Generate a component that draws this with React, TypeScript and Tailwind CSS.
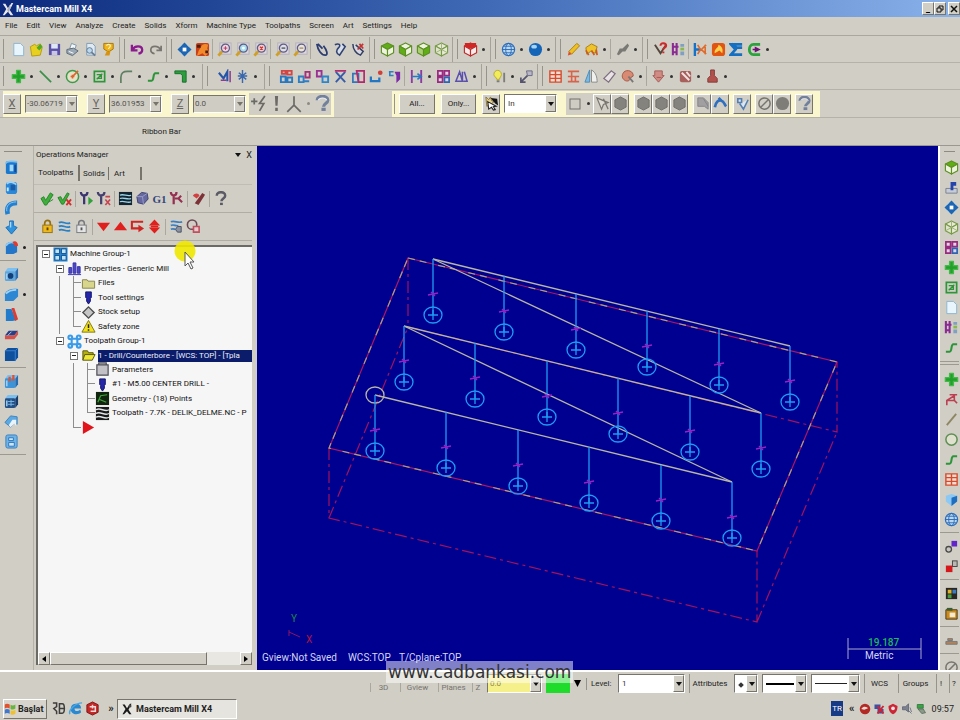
import React from 'react';

type IconMap = Record<string, React.ReactNode>;

const magnifier = (lens: string, mark: React.ReactNode) => (
  <>
    <rect x="3" y="1" width="12" height="12" fill="#ddd6dc" stroke="#b3aebb" />
    <path d="M5.5 10 1.500 14.500" stroke="#cf9f26" strokeWidth="3" />
    <circle cx="9" cy="6.500" r="4.300" fill={lens} stroke="#5f5d86" strokeWidth="1.400" />
    {mark}
  </>
);

const cube = (top: string, left: string, right: string, line = '#5d8f22') => (
  <g stroke={line} strokeWidth="1.200" strokeLinejoin="round">
    <path d="M8 1 14.500 4.300 8 8 1.500 4.300z" fill={top} />
    <path d="M1.500 4.300 8 8v7l-6.500-3.500z" fill={left} />
    <path d="M14.500 4.300 8 8v7l6.500-3.500z" fill={right} />
  </g>
);

const hexagon = (fill: string) => (
  <path d="M8 1 14 4.2V11.8L8 15 2 11.8V4.2z" fill={fill} stroke="#6f6e69" />
);

const solid = (front: string, accent: string) => (
  <>
    <path d="M1 5 4 1h11l-3 4z" fill="#7cc0f2" />
    <path d="M12 5 15 1v10l-3 4z" fill={accent} />
    <rect x="1" y="4.500" width="11" height="10.500" rx="1.500" fill={front} />
    <path d="M3 7v6" stroke="#a5d6fb" strokeWidth="1.500" />
  </>
);

const icons: IconMap = {
  newFile: (
    <path d="M3 1.5h7l3.5 3.5v9.5H3z" fill="#e9f5fd" stroke="#8db4cf" />
  ),
  open: (
    <>
      <path d="M1.5 5 6 2.5l2 1.5 4-2 2 4-2 8-9 1z" fill="#e8d021" stroke="#b59a10" />
      <path d="M8 6 12 2l2.5 3-3.5 4z" fill="#4faa25" />
    </>
  ),
  save: (
    <>
      <path d="M2 2h12v12H2z" fill="#5a50a8" />
      <path d="M4.5 2h7v5h-7z" fill="#dfe6f5" />
      <path d="M5 9.500h6V14H5z" fill="#c9c6e4" />
    </>
  ),
  print: (
    <>
      <path d="M5 7 7 1.500l5 2-1.500 4z" fill="#f4f8fb" stroke="#7d93a6" />
      <path d="M2 8 9 6.500l5 3-6 5-6-2.500z" fill="#9aa7b4" stroke="#5d6a78" />
      <path d="m4 10 5 2" stroke="#fff" />
    </>
  ),
  preview: (
    <>
      <path d="M4 1.500h6l3 3V14H4z" fill="#dfeaf3" stroke="#7f9bb3" />
      <circle cx="7" cy="9" r="3" fill="#bcd9ee" stroke="#5d7790" />
      <path d="m9 11 4 3.500" stroke="#6b7f92" strokeWidth="2" />
    </>
  ),
  trophy: (
    <>
      <path d="M3 1.500h10v6L9 10H7L3 7.500z" fill="#f0b41c" stroke="#a8740a" />
      <path d="M6 10h4l-1 4.500H4z" fill="#d8920f" />
      <path d="M6 4c0-2 4-2 4 0S8 6 8 7.500" stroke="#fff2b0" fill="none" strokeWidth="1.300" />
    </>
  ),
  undo: <path d="M2 3v6h6M2.500 8.500C5 3.500 12.500 3.500 13 8c.2 2.500-1.500 4-4 4.500" fill="none" stroke="#8c1a8f" strokeWidth="2.400" />,
  redo: <path d="M14 4v5H9M13.500 8.500C11 3.500 3.500 3.500 3 8c-.2 2.500 1.500 4 4 4.500" fill="none" stroke="#77756f" strokeWidth="1.800" />,
  fit: (
    <>
      <path d="M8 .5 15.500 8 8 15.500.5 8z" fill="#1d66b4" />
      <path d="M3 5.500 5.500 3M10.500 3 13 5.500M13 10.500 10.500 13M5.500 13 3 10.500" stroke="#7db8e4" />
      <rect x="6" y="6" width="4" height="4" fill="#fff" />
    </>
  ),
  repaint: (
    <>
      <rect x="1" y="1" width="14" height="14" rx="2" fill="#c8401a" />
      <path d="M6 6c2-5 6-4 8-3l-1 4 2 4-4 4-3-3-6 3 2-6z" fill="#f28a2c" />
      <path d="M2 3h4v3H2zM11 9h3v3h-3z" fill="#4a1d12" />
    </>
  ),
  zoomWindow: magnifier('#f0d7dd', <path d="M7 6.500h4M9 4.500v4" stroke="#b03868" />),
  zoomTarget: magnifier('#a9e0f0', <circle cx="9" cy="6.500" r="1.500" fill="#fff" />),
  zoomSelected: magnifier('#f3cfcf', <path d="m7.500 5 3 3M10.500 5l-3 3" stroke="#d03030" strokeWidth="1.400" />),
  zoomOut: magnifier('#dfdfe6', <path d="M7 6.500h4" stroke="#445" strokeWidth="1.300" />),
  zoomHalf: magnifier('#e9e6d8', <path d="M7 6.500h4" stroke="#865" />),
  spin: <path d="M2 2c1 7 5 12 9 12 3 0 2-5-2-10M3 2l5 5" fill="none" stroke="#2a3c70" strokeWidth="1.900" />,
  spinPen: (
    <path d="M2 3c4-2 7 0 4 3s-3 6 1 8l6-9-3-3" fill="#d7dde9" stroke="#2f4272" strokeWidth="1.700" />
  ),
  spinRed: (
    <>
      <path d="M2 2c0 6 4 11 8 12l3-4-8-7" fill="#d6d9e2" stroke="#344061" strokeWidth="1.600" />
      <path d="m7 8 6-6M9 2l4 5" stroke="#c43131" strokeWidth="1.800" />
    </>
  ),
  cubeTop: cube('#5fae16', '#edf3de', '#edf3de'),
  cubeFront: cube('#edf3de', '#5fae16', '#edf3de'),
  cubeSide: cube('#edf3de', '#a9cf72', '#5fae16'),
  cubeIso: (
    <>
      {cube('#e8ead6', '#dfe3cb', '#e8ead6', '#789b48')}
      <path d="M8 1v7M1.500 11.500 8 8l6.500 3.500" stroke="#9cb27a" fill="none" />
    </>
  ),
  cubeRed: (
    <>
      {cube('#e9b9b4', '#f7eceb', '#f7eceb', '#c02a2a')}
      <path d="M2 1h12v4l-6 2-6-2z" fill="#cf2626" />
    </>
  ),
  globe: (
    <g fill="none" stroke="#2c6cba">
      <circle cx="8" cy="8" r="6.500" fill="#bcd8ee" strokeWidth="1.300" />
      <ellipse cx="8" cy="8" rx="3" ry="6.500" />
      <path d="M1.500 8h13M3 4.500h10M3 11.500h10" />
    </g>
  ),
  sphere: (
    <>
      <circle cx="8" cy="8" r="7" fill="#1464b8" />
      <ellipse cx="6.500" cy="5" rx="3" ry="2" fill="#a6d4f5" />
    </>
  ),
  pencil: (
    <>
      <path d="M11.500 1.500 14.500 4 6 13l-3-3z" fill="#f0c020" stroke="#a97d12" />
      <path d="M3 10l3 3-4 1.500z" fill="#dd4a28" />
    </>
  ),
  pencils: (
    <>
      <path d="M2 6 8 2l6 3-2 7-5-2-4 3z" fill="#eec42a" stroke="#a97c14" />
      <path d="M2 9 5 14M8 9l3 5M13 8l1 6" stroke="#cc5b22" strokeWidth="1.800" />
    </>
  ),
  pencilGray: <path d="M13.500 1.500 8 7H5l-3 6 2 1 4-4h3l4-6z" fill="#7b7974" />,
  askRed: (
    <>
      <path d="m2 3 6 9 6-9" fill="none" stroke="#55463c" strokeWidth="2" />
      <path d="M8 4c0-4 6-3 6 0 0 2-3 2-3 4M11 10v2" fill="none" stroke="#d02828" strokeWidth="2.200" />
    </>
  ),
  machine: (
    <>
      <path d="M2 1v13M2 5h6M6 1v13M2 11h4" stroke="#8a2a93" strokeWidth="2.200" />
      <path d="M10 2h4v3h-4zM10 10h4v4h-4z" fill="#7f9fc4" />
      <path d="M10 6h4v3h-4z" fill="#8cb84a" />
    </>
  ),
  mirrorBlue: (
    <>
      <path d="M2 1v14M2 8h6" stroke="#1672c6" strokeWidth="2.500" />
      <path d="M5 3 8 8 5 13M14 3l-5 5 5 5M13 3v10" fill="none" stroke="#e06a2c" strokeWidth="1.700" />
    </>
  ),
  flame: (
    <>
      <rect x="1" y="1" width="14" height="14" rx="3" fill="#e05512" />
      <path d="M4 12C3 7 8 7 8 3c4 2 5 5 4 9l-3-3z" fill="#ffd04d" />
    </>
  ),
  sigma: <path d="M14 2.500H2L7 8l-5 5.500h12M3 2l5 4h6" fill="none" stroke="#1570c4" strokeWidth="2.800" />,
  cRegion: (
    <>
      <path d="M14 2.500H7C1 2.500 1 13.500 7 13.500h7" fill="none" stroke="#2aa33c" strokeWidth="3" />
      <path d="M6 8h6M9 6l4 2-4 2z" stroke="#6c1577" fill="#6c1577" strokeWidth="1.500" />
    </>
  ),
  point: <path d="M6 1.500h4V6h4.500v4H10v4.500H6V10H1.500V6H6z" fill="#23a02b" stroke="#45b84a" strokeLinejoin="round" strokeWidth="1.500" />,
  line: <path d="m2 2 12 12" stroke="#3b8f48" strokeWidth="1.800" />,
  arc: (
    <>
      <circle cx="8" cy="8" r="6.500" fill="#e4e2c8" stroke="#3e9a4a" strokeWidth="1.600" />
      <path d="M6 8h4M8 6v4M9 7l5-5" stroke="#e2622b" strokeWidth="1.700" />
    </>
  ),
  rect: (
    <>
      <rect x="2.500" y="2.500" width="11" height="11" fill="none" stroke="#2d9639" strokeWidth="1.800" />
      <path d="M5 6h5v4H5M11 5 5 11" fill="none" stroke="#2d9639" strokeWidth="1.400" />
    </>
  ),
  fillet: <path d="M2 15V9c0-5 3-6.500 7-6.500h5" fill="none" stroke="#5f7f62" strokeWidth="1.800" />,
  spline: <path d="M2 12.500h4c3 0 1-8 4-8h4" fill="none" stroke="#2c9439" strokeWidth="2.200" />,
  sweep: <path d="M2 2h12v12h-4V7L8 5H2z" fill="#2e9d3c" stroke="#14702a" />,
  dimension: (
    <>
      <path d="m2 4 5 6 4-7v10" fill="none" stroke="#2355a8" strokeWidth="2.200" />
      <path d="M14 2v12M4 12h6" stroke="#8b3c90" strokeWidth="1.600" />
    </>
  ),
  note: <path d="M8 1v14M4 4l4 3 4-3M4 11l4-3 4 3M3 7.500h10" fill="none" stroke="#3b67ad" strokeWidth="1.500" />,
  xTranslate: (
    <g fill="none" strokeWidth="2">
      <path d="M2 8h5v6H2zM9 9h5v5H9z" stroke="#2878c0" />
      <path d="M9 2h4.500v4H9zM3 2h4v3H3z" stroke="#d24545" />
    </g>
  ),
  xRotate: (
    <g fill="none" strokeWidth="2">
      <path d="M2 8h5v6H2zM8 13h5" stroke="#2b7fc7" />
      <path d="M9 3h4.500v6H9z" stroke="#a33079" />
    </g>
  ),
  xMirror: (
    <g fill="none" strokeWidth="2">
      <path d="M2 2h5v6H2z" stroke="#9b2f94" />
      <path d="M8 8h6v6H8z" stroke="#2d86cc" />
    </g>
  ),
  xOffset: (
    <>
      <path d="m3 3 10 11M13 3 3 14" stroke="#375ba9" strokeWidth="2" />
      <path d="M2 2h12" stroke="#b3276c" strokeWidth="1.800" />
    </>
  ),
  xScale: (
    <g fill="none" strokeWidth="1.800">
      <path d="M2 5h6v9H2z" stroke="#3175bf" />
      <path d="M6 2h8v12H8z" stroke="#b3276c" />
    </g>
  ),
  xDrag: (
    <>
      <path d="M2 8v5h9V9" fill="none" stroke="#2376c4" strokeWidth="2.400" />
      <circle cx="12" cy="4" r="2.500" fill="#d04038" />
    </>
  ),
  xRoll: (
    <>
      <path d="M8 3h6v8l-4 4V7z" fill="#7a2aa5" />
      <path d="M2 3h5M3 3v4h4" stroke="#2b7fc7" strokeWidth="1.700" fill="none" />
    </>
  ),
  nest: (
    <>
      <path d="M3 1v14M13 1v14" stroke="#8d3ba3" strokeWidth="2" />
      <path d="M3 8h10M9 5l4 3-4 3" fill="none" stroke="#2879c4" strokeWidth="1.700" />
    </>
  ),
  grid4: (
    <g fill="#dfd3e4" stroke="#99297f" strokeWidth="1.800">
      <path d="M2 2h5v5H2zM9 2h5v5H9zM2 9h5v5H2z" />
      <path d="M9 9h5v5H9z" stroke="#2e64b0" />
    </g>
  ),
  cone: <path d="M2 13 6 3l3 10zM9 3v10M11 3l3 10h-4" fill="none" stroke="#5a4fae" strokeWidth="1.600" />,
  bulb: (
    <>
      <path d="M2 6c0-6 8-6 8 0 0 2-2 3-2 5H5C5 9 2 8 2 6z" fill="#f2ec5a" stroke="#b5a92e" />
      <path d="M5 13h3M13 4v10" stroke="#7d7d78" strokeWidth="2" />
    </>
  ),
  gears: (
    <>
      <path d="M8 2h6v5H9z" fill="#b9b7c5" stroke="#6b6985" />
      <path d="M9 7 3 13M2 9v5h5" fill="none" stroke="#55536e" strokeWidth="1.800" />
    </>
  ),
  redGrid: <path d="M2 2h12v12H2zM8 2v12M2 6h12M2 10h12" fill="#f4dcd2" stroke="#d54c2d" strokeWidth="1.500" />,
  redTable: <path d="M2 2.500h12M2 8h12M2 13.500h12M6 2v12M10 8v6" stroke="#d9634a" strokeWidth="1.700" />,
  mirrorHalf: (
    <>
      <path d="M6 1v13H1z" fill="#7fb9de" stroke="#4b8dba" />
      <path d="M8 1c5 3 6 8 6 13H8z" fill="#f0f0ee" stroke="#888" />
    </>
  ),
  eraser: <path d="m10 2 4 3-7 9-5-4z" fill="#e9e3e6" stroke="#7c6e7e" strokeWidth="1.300" />,
  palette: (
    <>
      <path d="M3 5c2-5 10-4 11 1 1 3-3 2-3 4s-3 4-6 2-3-5-2-7z" fill="#d98a72" stroke="#a35644" />
      <path d="m9 8 5 6" stroke="#777" strokeWidth="2" />
    </>
  ),
  toolRed: <path d="M4 2h8v5h2l-6 7-6-7h2zM6 9h5" fill="#cf8b84" stroke="#a45a55" />,
  toolBlock: (
    <>
      <rect x="2" y="2" width="12" height="12" rx="2" fill="#a8605c" />
      <path d="m4 4 8 8M9 3l4 5" stroke="#f0e2e0" strokeWidth="2" />
    </>
  ),
  toolFlat: <path d="M6 1h4v6l3 3v4H3v-4l3-3z" fill="#b2524d" stroke="#843a37" />,
  bolt: <path d="M1 6h6M4 3v6M14 1 9 8h4l-4 7" fill="none" stroke="#6c6a65" strokeWidth="1.600" />,
  bang: <path d="M6.500 1h3L9 10H7zM6.800 12h2.400v3H6.800z" fill="#6c6a65" />,
  axes: <path d="M8 1v8M8 9l-6 6M8 9l6 6" stroke="#6c6a65" strokeWidth="1.500" fill="none" />,
  help: (
    <>
      <path d="M4 5c0-5 9-5 9 0 0 3-4 3-4 6" fill="none" stroke="#5c5a66" strokeWidth="2.600" />
      <rect x="7.500" y="12.500" width="3" height="2.500" fill="#5c5a66" />
    </>
  ),
  helpBlue: (
    <>
      <path d="M3 5c0-5 10-5 10 0 0 3-4 3-4 6" fill="none" stroke="#73809a" strokeWidth="3" />
      <path d="M4 5c1-3 7-3 8 0" fill="none" stroke="#e8eef7" />
      <rect x="7" y="12" width="4" height="3" fill="#73809a" />
    </>
  ),
  cursorStar: (
    <>
      <path d="m2 1 3 3 2-3 1 4 3 1-3 2v4L6 9l-3 2z" fill="#e5d38a" stroke="#8a7440" />
      <path d="m4 6 9 5-3 .5 2 3-2 .5-2-3-3 2z" fill="#fff" stroke="#222" strokeWidth="1.200" />
      <path d="m7 2 7 1 1 7-3-2z" fill="#111" />
    </>
  ),
  box: <rect x="3" y="3" width="10" height="10" fill="#cfccc3" stroke="#73716b" />,
  arrows: <path d="M2 2 7 14 9 9l5-2zM9 3l5 11" fill="#dedbd2" stroke="#77756e" strokeWidth="1.300" />,
  hex: hexagon('#85837e'),
  sheet: <path d="M3 2h6l5 5v7l-4-3H3zM9 3l5 8" fill="#a19fa0" stroke="#85838a" />,
  curveBlue: <path d="M2 12c1-6 4-8 7-7 3 1 3 4 5 6M9 5 6 2" fill="none" stroke="#2f6fc0" strokeWidth="2.800" />,
  verify: <path d="M3 3h4v4H3zM5 8l4 6 5-10" fill="#dde6f0" stroke="#557fb0" strokeWidth="1.700" />,
  noSign: (
    <g fill="none" stroke="#77756f" strokeWidth="1.600">
      <circle cx="8" cy="8" r="6" />
      <path d="m4 12 8-8" />
    </g>
  ),
  disk: <circle cx="8" cy="8" r="7" fill="#7f7d78" />,
  solidA: (
    <>
      <rect x="2" y="1" width="12" height="14" rx="2" fill="#1b78cf" />
      <path d="M2 4c0-3 8-3 12-2" stroke="#7cc0f2" strokeWidth="1.800" fill="none" />
      <path d="M6 5h4v7H6z" fill="#a5d6fb" />
      <path d="M11 5h2v8h-2z" fill="#0d4c9c" />
    </>
  ),
  solidB: (
    <>
      <rect x="2" y="2" width="12" height="13" rx="3" fill="#2b88d8" />
      <path d="M3 4c3-3 7-2 10 1" stroke="#9fd4f6" strokeWidth="2" fill="none" />
      <path d="M7 5h5v6H7z" fill="#1c5ca6" />
      <path d="M4 8v4" stroke="#cfeaff" strokeWidth="2" />
    </>
  ),
  solidArc: (
    <>
      <path d="M4 15C2 7 6 3 14 3" fill="none" stroke="#2380d0" strokeWidth="5" />
      <path d="M3 12C2 6 6 2 13 2" fill="none" stroke="#8ecbf5" />
    </>
  ),
  solidDrop: (
    <>
      <path d="M6 1h4v5l4 2-6 7-6-7 4-2z" fill="#2f93dd" stroke="#1d6cb5" />
      <path d="M7 2v6" stroke="#a5d6fb" strokeWidth="1.500" />
    </>
  ),
  solidBox: (
    <>
      <path d="M2 6c0-5 12-5 12 0v7l-4 2H2z" fill="#2476c8" />
      <path d="M2 6c2-3 6-4 9-3" stroke="#8ecbf5" strokeWidth="2" fill="none" />
      <path d="M9 2c3-2 6 0 6 4l-3 1z" fill="#e23a30" />
    </>
  ),
  solidHole: (
    <>
      {solid('#5fa6dc', '#2d6fb2')}
      <circle cx="7" cy="9.500" r="3" fill="#123f78" />
    </>
  ),
  solidRound: (
    <>
      <path d="M1 7c2-4 7-6 14-5v8l-5 5H1z" fill="#2d87d2" />
      <path d="M2 7c3-3 6-4 11-4" stroke="#9fd4f6" fill="none" strokeWidth="2" />
    </>
  ),
  solidWedge: (
    <>
      <path d="M2 2h6l5 12-4 1H2z" fill="#237ccb" />
      <path d="M8 1h3l4 12-3 2z" fill="#dc3c32" />
    </>
  ),
  solidPlate: (
    <>
      <path d="M1 9 5 4h10l-4 5z" fill="#293e86" />
      <path d="M1 9h10v4H1zM11 9l4-5v4l-4 5z" fill="#d2514b" />
      <path d="M4 9 8 5" stroke="#bcd3ee" />
    </>
  ),
  solidDark: (
    <>
      <path d="M1 4 4 1h11v10l-3 4H1z" fill="#0f509e" />
      <path d="M1 4h11v11M12 4l3-3" stroke="#3c82cf" fill="none" />
    </>
  ),
  solidSlot: (
    <>
      {solid('#3d93d8', '#256db3')}
      <path d="M6 3v5M10 1v6" stroke="#e0512f" strokeWidth="2.400" />
    </>
  ),
  solidGrid: (
    <>
      {solid('#214f86', '#173d6c')}
      <path d="M4 8h7M4 11h7M7.500 6v7" stroke="#7ab8e6" />
    </>
  ),
  solidLeaf: (
    <>
      <path d="M1 9 7 2l7 1v8l-3-2-4 5z" fill="#5ba9e2" stroke="#3f80bb" />
      <path d="M9 6h4v7l-2-3-4 4-2-2z" fill="#e8f3fb" />
    </>
  ),
  solidLight: (
    <>
      <rect x="2" y="1" width="12" height="14" rx="2" fill="#6db3e8" stroke="#3a7fc0" />
      <path d="M5 4h5v3H5zM5 9h6v4H5z" fill="#c9e6fa" stroke="#2f73b5" />
    </>
  ),
  check: <path d="m1 8 3-2 2 4 5-8 3 2-7 11H5zM9 12l5-3" fill="#3fae3a" stroke="#24852a" />,
  checkX: (
    <>
      <path d="m1 7 3-1 2 4 5-8 2 1-6 11H5z" fill="#3fae3a" stroke="#24852a" />
      <path d="m10 9 5 6M15 9l-5 6" stroke="#d32d2d" strokeWidth="1.900" />
    </>
  ),
  toolPlus: (
    <>
      <path d="M2 1c0 5 7 5 7 0M5.500 4v10" fill="none" stroke="#3a3470" strokeWidth="2.400" />
      <path d="M10 6v9l5-4.500z" fill="#2fa03a" />
    </>
  ),
  toolX: (
    <>
      <path d="M2 1c0 5 7 5 7 0M5.500 4v10" fill="none" stroke="#46406f" strokeWidth="2.400" />
      <path d="m10 9 5 6M15 9l-5 6M10 6h5" stroke="#c8444f" strokeWidth="1.700" />
    </>
  ),
  backplot: (
    <>
      <rect x="1" y="1" width="14" height="14" fill="#142430" />
      <path d="M2 4.500c4-2 8 2 12 0M2 8c4-2 8 2 12 0M2 11.500c4-2 8 2 12 0" stroke="#9bd6ea" fill="none" strokeWidth="1.400" />
    </>
  ),
  verifySolid: (
    <>
      <path d="M2 6 7 1.500l6 1 1 6-5 5.500-6-1.500z" fill="#66699f" stroke="#3e416f" />
      <path d="M2 6h6l5-3.500M8 6l1 8" stroke="#9a9cc9" fill="none" />
    </>
  ),
  highfeed: (
    <>
      <path d="M2 1c0 5 6 5 6 0M5 4v10" fill="none" stroke="#963052" strokeWidth="2.400" />
      <path d="M6 8h4l3-3M10 8l4 4" fill="none" stroke="#963052" strokeWidth="2.200" />
    </>
  ),
  wrench: (
    <>
      <path d="M4 13 12 2l3 2-7 11z" fill="#7c3236" />
      <path d="M2 5c2-3 6-3 7 0L6 8z" fill="#d34040" />
    </>
  ),
  lockGold: (
    <>
      <path d="M5 7V4.500c0-4 6-4 6 0V7" fill="none" stroke="#96700c" strokeWidth="1.800" />
      <rect x="3" y="6.500" width="10" height="8" fill="#efb91d" stroke="#94700f" />
      <path d="M8 9v3" stroke="#5d4300" strokeWidth="2" />
    </>
  ),
  lockGray: (
    <>
      <path d="M5 7V4.500c0-4 6-4 6 0V7" fill="none" stroke="#77797e" strokeWidth="1.600" />
      <rect x="3" y="6.500" width="10" height="8" fill="#e4e4e4" stroke="#77797e" />
      <path d="M8 9v3" stroke="#555" strokeWidth="2" />
    </>
  ),
  waves: <path d="M2 4c4-3 8 3 12 0M2 8c4-3 8 3 12 0M2 12c4-3 8 3 12 0" fill="none" stroke="#2980c5" strokeWidth="1.900" />,
  down: <path d="M1 4h14L8 13z" fill="#e0201c" />,
  up: <path d="M1 12h14L8 3z" fill="#e0201c" />,
  insert: (
    <>
      <path d="M14 3H2v7h8" fill="none" stroke="#cf2522" strokeWidth="2.200" />
      <path d="m9 6 6 4-6 4z" fill="#cf2522" />
    </>
  ),
  diamond: (
    <>
      <path d="m8 .5 6 6.500H2zM8 15.500 2 9h12z" fill="#e0201c" />
      <path d="M4 8h8" stroke="#e0201c" strokeWidth="2" />
    </>
  ),
  wavePointer: (
    <>
      <path d="M2 3c4-2 8 2 12 0M2 7c3-2 5 1 8 0M2 11c2-1 4 0 5 0" fill="none" stroke="#3a7fc4" strokeWidth="1.800" />
      <path d="M9 8h4v6H9l-2-3z" fill="#8c93a2" stroke="#4b5060" />
    </>
  ),
  rings: (
    <>
      <circle cx="6.500" cy="6" r="5" fill="none" stroke="#6b4a55" strokeWidth="1.700" />
      <path d="M8 8h6v6H8z" fill="#e6c9cc" stroke="#c0505e" strokeWidth="1.700" />
    </>
  ),
  group: (
    <>
      <rect x=".5" y=".5" width="15" height="15" fill="#2a86cf" />
      <g fill="#bfe3fa" stroke="#0f4f8f">
        <path d="M2 2h5v5H2zM9 2h5v5H9zM2 9h5v5H2zM9 9h5v5H9z" />
      </g>
    </>
  ),
  groupLight: (
    <g fill="none" stroke="#3a9be8" strokeWidth="2.200">
      <circle cx="3.500" cy="3.500" r="2" />
      <circle cx="12.500" cy="3.500" r="2" />
      <circle cx="3.500" cy="12.500" r="2" />
      <circle cx="12.500" cy="12.500" r="2" />
      <path d="M5 5h6v6H5z" />
    </g>
  ),
  properties: <path d="M2 13V7h3v6zM6.500 13V2h3v11zM11 13V6h3v7zM1 14.500h14" fill="#4a48c8" stroke="#3431a6" />,
  folder: <path d="M1.500 4h5l1 1.500h7V13h-13z" fill="#d8d58d" stroke="#85824b" />,
  folderOpen: (
    <>
      <path d="M2 13V3h5l1 2h5v2" fill="#b5b012" stroke="#55540c" />
      <path d="M4 7h11l-3 6H2z" fill="#ece635" stroke="#55540c" />
    </>
  ),
  drill: <path d="M5 2h6v6l-1 1v3l-2 3-2-3V9L5 8z" fill="#2526a8" stroke="#14156a" />,
  stock: <path d="m8 2 6 6-6 6-6-6z" fill="#c5c5c5" stroke="#4d4d4d" strokeWidth="1.500" />,
  warning: (
    <>
      <path d="M8 1.500 15 14H1z" fill="#f1e01b" stroke="#7d7514" />
      <path d="M8 5.500v4M8 11v1.500" stroke="#222" strokeWidth="1.600" />
    </>
  ),
  params: <path d="M2 3h12v11H2zM4 1h8v2H4z" fill="#c3c1c6" stroke="#4f4d57" strokeWidth="1.300" />,
  geometry: (
    <>
      <rect x="1" y="1" width="14" height="14" fill="#10240f" />
      <path d="M3 12 6 5l7-1M5 9l7 3" fill="none" stroke="#3ea53a" strokeWidth="1.300" />
    </>
  ),
  ncFile: (
    <>
      <rect x="1" y="1" width="14" height="14" fill="#17191b" />
      <path d="M1 4c5-3 9 3 14 0M1 8c5-3 9 3 14 0M1 12c5-3 9 3 14 0" stroke="#e2e8e8" fill="none" strokeWidth="1.500" />
    </>
  ),
  insertArrow: <path d="M2 1v14l12-7z" fill="#e0141a" />,
  plane: (
    <>
      <path d="M2 9h12v5H2z" fill="#c7ccd6" stroke="#78808f" />
      <path d="M7 2h6v4h-3v5H7z" fill="#2444ac" />
    </>
  ),
  lineTan: <path d="M3 14 13 2" stroke="#8d8764" strokeWidth="2" />,
  circleGreen: <circle cx="8" cy="8" r="6" fill="#dfe0cd" stroke="#5f8f54" strokeWidth="1.600" />,
  chevronBlue: (
    <>
      <path d="M2 4 8 2l6 2v6l-6 5-6-5z" fill="#8cc8f4" />
      <path d="m8 6 6-2v6l-6 5z" fill="#1f6fc0" />
    </>
  ),
  redCurve: <path d="M3 14V9l8-5v5l3 3M3 9h9M6 3h8" fill="none" stroke="#bd3f52" strokeWidth="1.700" />,
  swapPurple: (
    <>
      <rect x="8" y="2" width="6" height="6" fill="#6225c9" />
      <circle cx="5" cy="11" r="3" fill="#c9c7c2" stroke="#4b4a48" strokeWidth="1.400" />
    </>
  ),
  swapRed: (
    <>
      <rect x="9" y="2" width="5" height="6" fill="#bab8b2" stroke="#454442" />
      <rect x="2" y="7" width="7" height="7" fill="#d4181b" />
    </>
  ),
  colors: (
    <>
      <rect x="2" y="2" width="12" height="12" fill="#2a2722" />
      <path d="M4 4h4v4H4z" fill="#e0b226" />
      <path d="M9 4h4v4H9z" fill="#3c7ac0" />
      <path d="M4 9h4v4H4z" fill="#4b9c3e" />
    </>
  ),
  colorsGold: (
    <>
      <path d="M2 4h12v10H2z" fill="#ca8a1d" stroke="#4a3717" />
      <path d="M6 7h6v5H6z" fill="#f4ead4" />
      <path d="M3 2h6v3H3z" fill="#3b5d36" />
    </>
  ),
  bar: <path d="M2 9h12v3H2zM4 6h5v2H4z" fill="#b2825a" stroke="#777" />,
  mcx: (
    <>
      <path d="M2 2h3l3 5 4-6h2l-4 8 4 6h-3l-3-4-4 4H2l4-7z" fill="#e9e9e9" />
      <path d="m7 9 3-6 1 3-2 6z" fill="#a8b0c0" />
    </>
  ),
  mcxDark: (
    <>
      <path d="M2 2h3l3 5 4-6h2l-4 8 4 6h-3l-3-4-4 4H2l4-7z" fill="#1b1b1b" />
      <circle cx="12" cy="4" r="2" fill="#444" />
    </>
  ),
  windows: (
    <>
      <path d="M1 3c2-1.500 4-1 6 0v5c-2-1-4-1.500-6 0z" fill="#e4502a" />
      <path d="M8 3.500c2 1 4 1 6-.5v5c-2 1.500-4 1.500-6 .5z" fill="#69b53b" />
      <path d="M1 9.500c2-1.500 4-1 6 0v5c-2-1-4-1.500-6 0z" fill="#3f77d0" />
      <path d="M8 10c2 1 4 1 6-.5v5c-2 1.500-4 1.500-6 .5z" fill="#f0c12c" />
    </>
  ),
  quickTool: <path d="M2 2h4v4l-3 2 3 3v3M9 3h3c3 0 3 10 0 10H9zM9 8h5" fill="none" stroke="#3e3d3b" strokeWidth="1.600" />,
  ie: (
    <>
      <path d="M9 3c3 0 5 2 5 5H7c0 4 4 3 6 1l1 3c-4 4-11 2-11-3s3-6 6-6z" fill="#2888d2" />
      <path d="M2 14C0 9 9 2 15 2" stroke="#4ca7e0" fill="none" strokeWidth="1.500" />
    </>
  ),
  redCube: (
    <>
      <path d="m8 1 6 3v8l-6 3-6-3V4z" fill="#c52626" stroke="#7d1616" />
      <path d="M5 6h6v5H6M8 4v4" fill="none" stroke="#f4dada" strokeWidth="1.600" />
    </>
  ),
  trayBall: (
    <>
      <circle cx="8" cy="8" r="7" fill="#b32a24" />
      <path d="M3 8c3-5 8-3 9-1L7 9z" fill="#f3d9d4" />
    </>
  ),
  trayNet: (
    <>
      <path d="M2 2h8v6H2zM6 8h8v6H6z" fill="#3b51a4" />
      <path d="m6 4 8 10M14 4 6 14" stroke="#d7202c" strokeWidth="2.500" />
    </>
  ),
  trayShield: (
    <>
      <path d="M8 1 14 4c0 6-2 9-6 11-4-2-6-5-6-11z" fill="#cc2535" />
      <circle cx="8" cy="7" r="2.500" fill="#f4e3e3" />
    </>
  ),
  traySound: <path d="M2 5h4l4-4v11L6 9H2zM10 10l4 4M12 6l2 6" fill="#7d8290" stroke="#595f70" />,
  trayUsb: (
    <>
      <path d="M3 2h8v5H3z" fill="#3aa346" stroke="#257030" />
      <path d="M4 8h7l3 5-5 1z" fill="#8b9a8c" stroke="#536354" />
    </>
  ),
};

const Icon = ({ name, className = 'size-4' }: { name: string; className?: string }) => (
  <svg viewBox="0 0 16 16" aria-hidden="true" className={`shrink-0 ${className}`}>
    {icons[name]}
  </svg>
);

// "." drop-down mark, "|" thin separator, "||" toolbar boundary, "=" wide boundary
const rowOne = [
  'newFile', 'open', 'save', 'print', 'preview', 'trophy', '||', 'undo', 'redo', '||',
  'fit', 'repaint', '|', 'zoomWindow', 'zoomTarget', 'zoomSelected', '|', 'zoomOut', 'zoomHalf', '|',
  'spin', 'spinPen', 'spinRed', '||', 'cubeTop', 'cubeFront', 'cubeSide', 'cubeIso', '||',
  'cubeRed', '.', '||', 'globe', '.', 'sphere', '.', '||', 'pencil', 'pencils', '.', '|', 'pencilGray', '.', '||',
  'askRed', 'machine', '|', 'mirrorBlue', 'flame', 'sigma', 'cRegion', '.',
];

const rowTwo = [
  'point', '.', 'line', '.', 'arc', '.', 'rect', '.', 'fillet', '.', 'spline', '.', 'sweep', '.', '=',
  'dimension', 'note', '.', '=', 'xTranslate', 'xRotate', 'xMirror', 'xOffset', 'xScale', 'xDrag', 'xRoll', '|',
  'nest', '.', 'grid4', 'cone', '.', '||', 'bulb', '.', 'gears', '||',
  'redGrid', 'redTable', 'mirrorHalf', 'eraser', 'palette', '.', '|', 'toolRed', '.', 'toolBlock', '.', 'toolFlat', '.',
];

const leftBar = [
  'solidA', 'solidB', 'solidArc', 'solidDrop', 'solidBox.', '|',
  'solidHole', 'solidRound.', 'solidWedge', 'solidPlate', 'solidDark', '|',
  'solidSlot', 'solidGrid', 'solidLeaf', 'solidLight', '|',
];

const rightBar = [
  'cubeTop', 'plane', 'fit', 'cubeIso', 'grid4', 'point', 'rect', 'newFile', 'machine', 'spline', '||',
  'point', 'redCurve', 'lineTan', 'circleGreen', 'spline', 'redGrid', 'chevronBlue', 'globe', '|',
  'swapPurple', 'swapRed', '|', 'colors', 'colorsGold', '|', 'bar', '|', 'noSign',
];

const menus = ['File', 'Edit', 'View', 'Analyze', 'Create', 'Solids', 'Xform', 'Machine Type', 'Toolpaths', 'Screen', 'Art', 'Settings', 'Help'];

const treeRows = [
  { cells: ['box'], icon: 'group', label: 'Machine Group-1' },
  { cells: ['', 'box'], icon: 'properties', label: 'Properties - Generic Mill' },
  { cells: ['', 'line', 'tee'], icon: 'folder', label: 'Files' },
  { cells: ['', 'line', 'tee'], icon: 'drill', label: 'Tool settings' },
  { cells: ['', 'line', 'tee'], icon: 'stock', label: 'Stock setup' },
  { cells: ['', 'line', 'end'], icon: 'warning', label: 'Safety zone' },
  { cells: ['', 'box'], icon: 'groupLight', label: 'Toolpath Group-1' },
  { cells: ['', '', 'box'], icon: 'folderOpen', label: '1 - Drill/Counterbore - [WCS: TOP] - [Tpla', selected: true },
  { cells: ['', '', 'line', 'tee'], icon: 'params', label: 'Parameters' },
  { cells: ['', '', 'line', 'tee'], icon: 'drill', label: '#1 - M5.00 CENTER DRILL -' },
  { cells: ['', '', 'line', 'tee'], icon: 'geometry', label: 'Geometry - (18) Points' },
  { cells: ['', '', 'line', 'end'], icon: 'ncFile', label: 'Toolpath - 7.7K - DELIK_DELME.NC - P' },
  { cells: ['', '', 'end'], icon: 'insertArrow', label: '' },
];

const raised = 'border border-t-white border-l-white border-r-[#77746c] border-b-[#77746c]';
const sunken = 'border border-t-[#77746c] border-l-[#77746c] border-r-white border-b-white';

const Toolbar = ({ items, label }: { items: string[]; label: string }) => (
  <div role="toolbar" aria-label={label} className="flex h-[27px] items-center border-b border-[#b5b2a9] pl-[3px]">
    <span className="mr-[5px] h-5 w-px bg-[#96938b]" />
    {items.map((item, i) => {
      if (item === '.') {
        return <span key={i} className="flex w-[9px] justify-center"><span className="size-[3px] rounded-full bg-[#333]" /></span>;
      }
      if (item === '|') {
        return <span key={i} className="mx-px h-5 w-[2px] border-l border-[#aaa79e]" />;
      }
      if (item === '||' || item === '=') {
        return (
          <span key={i} className={`flex h-[25px] items-center ${item === '=' ? 'w-[17px] pl-[4px]' : 'w-[11px] pl-[2px]'}`}>
            <span className="h-full w-[5px] border-l border-[#a5a299]" />
            <span className="h-5 w-px bg-[#96938b]" />
          </span>
        );
      }
      return (
        <button key={i} aria-label={item} className="flex w-[18px] justify-center">
          <Icon name={item} className="size-[15px]" />
        </button>
      );
    })}
  </div>
);

const SideBar = ({ items, label }: { items: string[]; label: string }) => (
  <div role="toolbar" aria-label={label} className="flex flex-col overflow-hidden pt-[5px]">
    <span className="mx-1 mb-[5px] h-px shrink-0 bg-[#8e8b83]" />
    {items.map((item, i) => {
      if (item === '|') return <span key={i} className="my-[3px] h-px shrink-0 bg-[#9c9991]" />;
      if (item === '||') return <span key={i} className="my-[4px] h-[4px] shrink-0 border-y border-[#9c9991]" />;
      const hasMenu = item.endsWith('.');
      const name = item.replace('.', '');
      return (
        <button key={i} aria-label={name} className="flex h-5 shrink-0 items-center gap-[4px] pl-[4px]">
          <Icon name={name} className="size-[15px]" />
          {hasMenu && <span className="size-[3px] rounded-full bg-[#222]" />}
        </button>
      );
    })}
  </div>
);

const DropArrow = ({ dim = false }: { dim?: boolean }) => (
  <span className={`flex w-[11px] shrink-0 items-center justify-center bg-[#d0cec5] ${raised}`}>
    <svg viewBox="0 0 6 4" className="w-[6px]"><path d="M0 0h6L3 4z" fill={dim ? '#77746c' : '#111'} /></svg>
  </span>
);

const Coordinate = ({ axis, value }: { axis: string; value: string }) => (
  <>
    <button className={`h-5 w-[18px] bg-[#d0cec5] text-[11px] text-[#66645e] underline ${raised}`}>{axis}</button>
    <div className={`ml-[4px] flex h-[18px] w-[53px] bg-[#cfccc3] ${sunken}`}>
      <input aria-label={`${axis} coordinate`} defaultValue={value} className="w-full min-w-0 pl-px text-[#55534e] outline-none" />
      <DropArrow dim />
    </div>
  </>
);

const FlatButton = ({ name }: { name: string }) => (
  <button aria-label={name} className={`flex h-5 w-[18px] items-center justify-center bg-[#d0cec5] ${raised}`}>
    <Icon name={name} className="size-[15px]" />
  </button>
);

const SelectBox = ({ label, value, className, children }: { label: string; value: string; className: string; children?: React.ReactNode }) => (
  <div className={`relative flex bg-white ${sunken} ${className}`}>
    <select aria-label={label} className={`w-full min-w-0 appearance-none pl-[3px] outline-none ${children ? 'text-transparent' : 'text-[#333]'}`}>
      <option>{value}</option>
    </select>
    {children}
    <DropArrow />
  </div>
);

const InputBar = () => (
  <div className="flex h-[28px] items-center border-b border-[#b5b2a9] pl-[3px]">
    <div className="flex h-[26px] items-center gap-[3px] bg-[#faf6cd]">
      <div className="flex h-[22px] items-center gap-x-[9px]">
        <div className="flex items-center"><Coordinate axis="X" value="-30.06719" /></div>
        <div className="flex items-center"><Coordinate axis="Y" value="36.01953" /></div>
        <div className="flex items-center"><Coordinate axis="Z" value="0.0" /></div>
      </div>
      <div className="mr-[3px] flex h-[22px] items-center bg-[#d0cec5]">
        <button aria-label="Fast point" className="px-px"><Icon name="bolt" className="size-[17px]" /></button>
        <button aria-label="Settings"><Icon name="bang" className="size-[17px]" /></button>
        <button aria-label="Relative"><Icon name="axes" className="size-[18px]" /></button>
        <span className="mx-[4px] size-[3px] rounded-full bg-[#8d8a82]" />
        <button aria-label="Help"><Icon name="helpBlue" className="size-[17px]" /></button>
      </div>
    </div>
    <div className="ml-[58px] flex h-[26px] items-center bg-[#faf6cd] pl-[2px]">
      <span className="mr-[4px] h-5 w-px bg-[#96938b]" />
      <button className={`h-5 w-[36px] bg-[#d0cec5] ${raised}`}>All...</button>
      <button className={`mx-[6px] h-5 w-[35px] bg-[#d0cec5] ${raised}`}>Only...</button>
      <FlatButton name="cursorStar" />
      <SelectBox label="Selection mode" value="In" className="mr-[9px] ml-[4px] h-[19px] w-[53px]" />
      <div className="flex h-[22px] items-center bg-[#d0cec5]">
        <button aria-label="Window" className="px-px"><Icon name="box" /></button>
        <span className="mx-[3px] size-[3px] rounded-full bg-[#333]" />
        <FlatButton name="arrows" />
        <FlatButton name="hex" />
      </div>
      <div className="mx-[5px] flex">
        <FlatButton name="hex" />
        <FlatButton name="hex" />
        <FlatButton name="hex" />
      </div>
      <FlatButton name="sheet" />
      <FlatButton name="curveBlue" />
      <span className="w-[4px]" />
      <FlatButton name="verify" />
      <span className="w-[4px]" />
      <FlatButton name="noSign" />
      <FlatButton name="disk" />
      <span className="w-[4px]" />
      <FlatButton name="helpBlue" />
      <span className="w-[7px]" />
    </div>
  </div>
);

const TreeCell = ({ kind }: { kind: string }) => {
  if (kind === 'box') {
    return (
      <span className="flex h-full w-[14px] shrink-0 items-center justify-center">
        <span className="flex size-[8px] items-center justify-center border border-[#777] bg-white"><span className="h-px w-[4px] bg-[#222]" /></span>
      </span>
    );
  }
  if (kind === '') return <span className="w-[14px] shrink-0" />;
  return (
    <span className="flex h-full w-[14px] shrink-0">
      <span className={`w-[7px] border-r border-[#8d8d8d] ${kind === 'end' ? 'h-1/2' : 'h-full'}`} />
      {kind !== 'line' && <span className="h-1/2 w-[7px] border-b border-[#8d8d8d]" />}
    </span>
  );
};

const PanelTools = ({ items }: { items: string[] }) => (
  <div className="flex h-7 items-center border-b border-[#b0ada4] pl-[5px]">
    {items.map((item, i) =>
      item === '|' ? (
        <span key={i} className="mx-[2px] h-4 w-px bg-[#aaa79e]" />
      ) : (
        <button key={i} aria-label={item} className="flex w-[17px] justify-center font-['Liberation_Serif'] text-[11px] font-bold text-[#34457c]">
          {item === 'G1' ? 'G1' : <Icon name={item} className="size-[15px]" />}
        </button>
      ),
    )}
  </div>
);

const OperationsManager = () => (
  <section className="relative flex w-[223px] shrink-0 flex-col pr-[5px]">
    <header className="flex h-[17px] items-center pl-[2px] text-[#222]">
      <h2 className="flex-1">Operations Manager</h2>
      <button aria-label="Panel menu" className="mr-[5px]">
        <svg viewBox="0 0 6 4" className="w-[6px]"><path d="M0 0h6L3 4z" fill="#111" /></svg>
      </button>
      <button aria-label="Close panel" className="text-[9px]">X</button>
    </header>
    <div role="tablist" className="flex h-[20px] items-center pl-[4px]">
      <button role="tab" aria-selected="true" className="w-[42px] border-r-2 border-[#77746c] pb-px text-left leading-[15px]">Toolpaths</button>
      <button role="tab" className="w-[29px] border-r border-[#77746c] pl-[3px] text-left leading-[13px]">Solids</button>
      <button role="tab" className="w-[33px] border-r-2 border-[#77746c] pl-[5px] text-left leading-[13px]">Art</button>
    </div>
    <div className="mt-px border-t border-[#c0bdb4]">
      <PanelTools items={['check', 'checkX', '|', 'toolPlus', 'toolX', '|', 'backplot', 'verifySolid', 'G1', 'highfeed', '|', 'wrench', '|', 'help']} />
      <PanelTools items={['lockGold', 'waves', 'lockGray', '|', 'down', 'up', 'insert', 'diamond', '|', 'wavePointer', 'rings']} />
    </div>
    <div className="mt-[4px] mb-[5px] ml-[2px] flex min-h-0 flex-1 flex-col border-t-2 border-l-2 border-[#6c6a64] bg-[#f6f6f6]">
      <ul role="tree" aria-label="Operations" className="flex h-[188px] flex-col overflow-hidden pl-px">
        {treeRows.map((row, i) => (
          <li key={i} role="treeitem" className="flex min-h-0 flex-1 items-center whitespace-nowrap text-[#111]">
            {row.cells.map((kind, j) => <TreeCell key={j} kind={kind} />)}
            <Icon name={row.icon} className="mr-[2px] size-[15px]" />
            <span className={row.selected ? 'flex-1 bg-[#0a1c6a] text-[#eef0fb]' : ''}>{row.label}</span>
          </li>
        ))}
      </ul>
      <div className="flex-1" />
      <div className="flex h-[13px] bg-[#e9e7e1]">
        <button aria-label="Scroll left" className={`flex w-[12px] items-center justify-center bg-[#d0cec5] ${raised}`}>
          <svg viewBox="0 0 4 6" className="h-[6px]"><path d="M4 0v6L0 3z" /></svg>
        </button>
        <div className={`w-[157px] bg-[#d0cec5] ${raised}`} />
        <button aria-label="Scroll right" className={`ml-auto flex w-[12px] items-center justify-center bg-[#d0cec5] ${raised}`}>
          <svg viewBox="0 0 4 6" className="h-[6px]"><path d="M0 0v6l4-3z" /></svg>
        </button>
      </div>
    </div>
    <svg viewBox="0 0 22 30" className="pointer-events-none absolute top-[94px] left-[140px] w-[22px]" aria-hidden="true">
      <circle cx="11" cy="11" r="10.500" fill="#f0e800" fillOpacity=".9" />
      <path d="M11 12v14l3-3 3 6 2-1-3-6h4z" fill="#fff" stroke="#555" />
    </svg>
  </section>
);

// first hole of each drilling pass; the passes run parallel to each other
const passes = [
  { x: 375, y: 395 },
  { x: 404, y: 326 },
  { x: 433, y: 259 },
];

const Viewport = () => (
  <svg viewBox="257 146 681 524" className="block h-full w-full" role="img" aria-label="Drill toolpath in the graphics window">
    <g fill="none" stroke="#a3125c" strokeWidth="1.200" strokeDasharray="12 4 3 4">
      <path d="M329 448V518L757 622V551M408 258V327L837 432V362M329 518 408 327M757 622 837 432" />
    </g>
    <path d="M408 258 837 362 757 551 329 448z" fill="none" stroke="#b01560" strokeWidth="1.200" />
    <path d="M408 258 837 362 757 551 329 448z" fill="none" stroke="#a3a487" strokeWidth="1.200" strokeDasharray="7 5 7 12" />
    <g fill="none" stroke="#b9b7a4" strokeWidth="1.300">
      {passes.map((p) => <path key={p.x} d={`M${p.x} ${p.y}l357 87`} />)}
      <path d="M433 259 761 413M404 326 732 482" />
      <ellipse cx="375" cy="395" rx="9" ry="8" />
    </g>
    {passes.map((p) =>
      [0, 1, 2, 3, 4, 5].map((n) => {
        const x = p.x + Math.round(n * 71.4);
        const y = p.y + Math.round(n * 17.4);
        return (
          <g key={`${x}-${y}`} fill="none" stroke="#1f9bf5" strokeWidth="1.300">
            <path d={`M${x} ${y}v56`} />
            <ellipse cx={x} cy={y + 56} rx="9" ry="8" />
            <path d={`M${x - 5} ${y + 56}h10M${x} ${y + 51}v10`} />
            <path d={`M${x - 5} ${y + 36}l10 -2M${x + 2} ${y + 37}l-4 -4`} stroke="#9a1fc4" />
          </g>
        );
      }),
    )}
    <path d="m289 632 11 5M289 636v-6" stroke="#8d1466" fill="none" />
    <g fontFamily="Roboto, sans-serif" fontSize="10">
      <text x="291" y="622" fill="#1d8a4a">Y</text>
      <text x="306" y="643" fill="#b3133f">X</text>
      <g fill="#d5d5f2">
        <text x="262" y="661">Gview:Not Saved</text>
        <text x="348" y="661">WCS:TOP</text>
        <text x="399" y="661">T/Cplane:TOP</text>
        <text x="865" y="659">Metric</text>
      </g>
      <text x="868" y="646" fill="#1fb85a" fontWeight="500">19.187</text>
    </g>
    <path d="M848 649h73M848 638v21M921 638v21" stroke="#a9a9d0" fill="none" />
  </svg>
);

const StatusBar = () => (
  <footer className="flex h-[27px] shrink-0 items-center justify-end gap-[4px] overflow-hidden border-t-2 border-white pr-[2px] pb-[2px] whitespace-nowrap">
    <div className="flex gap-[4px] pt-[8px] leading-[9px] text-[#77756f]">
      <button className="w-[26px] border-l border-[#aaa79e]">3D</button>
      <button className="w-[34px] border-l border-[#aaa79e]">Gview</button>
      <button className="w-[30px] border-l border-[#aaa79e]">Planes</button>
      <button className="w-[11px] border-l border-[#aaa79e]">Z</button>
    </div>
    <div className={`flex h-[19px] w-[55px] bg-[#f6f08a] ${sunken}`}>
      <input aria-label="Z depth" defaultValue="0.0" className="w-full min-w-0 pl-[2px] text-[#8a8650] outline-none" />
      <DropArrow />
    </div>
    <button aria-label="Color" className="flex h-[19px] w-[36px] items-center">
      <span className="h-full w-[24px] bg-[#1fdc2a]" />
      <svg viewBox="0 0 6 6" className="ml-[4px] w-[7px]"><path d="M0 0h6L3 6z" /></svg>
    </button>
    <label className="flex items-center gap-[4px]">
      <span className="w-[28px] border-l border-[#96938b] pl-[4px]">Level:</span>
      <SelectBox label="Level" value="1" className="h-[19px] w-[67px]" />
    </label>
    <button className="h-[19px] w-[41px] border-l border-[#96938b]">Attributes</button>
    <SelectBox label="Point style" value="Dot" className="h-[19px] w-[24px]">
      <span className="pointer-events-none absolute top-[8px] left-[4px] size-[4px] rotate-45 bg-[#333]" />
    </SelectBox>
    <SelectBox label="Line style" value="Solid" className="h-[19px] w-[45px]">
      <span className="pointer-events-none absolute top-[8px] left-[3px] h-[2px] w-[28px] bg-black" />
    </SelectBox>
    <SelectBox label="Line width" value="Thin" className="h-[19px] w-[49px]">
      <span className="pointer-events-none absolute top-[8px] left-[3px] h-px w-[32px] bg-[#222]" />
    </SelectBox>
    <button className="h-[19px] w-[30px] border-l border-[#96938b]">WCS</button>
    <button className="h-[19px] w-[34px] border-l border-[#96938b]">Groups</button>
    <button className="h-[19px] w-[9px] border-l border-[#96938b]">!</button>
    <button className="h-[19px] w-[9px] border-l border-[#96938b]">?</button>
  </footer>
);

const Taskbar = () => (
  <div className="flex h-[23px] shrink-0 items-center pl-[3px] text-[9px]">
    <button className={`flex h-5 w-[44px] items-center gap-px bg-[#d6d4cc] font-bold ${raised}`}>
      <Icon name="windows" className="size-[13px]" />
      Başlat
    </button>
    <div className="ml-[4px] flex gap-[2px]">
      <button aria-label="Quick tool"><Icon name="quickTool" className="size-[15px]" /></button>
      <button aria-label="Browser"><Icon name="ie" className="size-[15px]" /></button>
      <button aria-label="Solid viewer"><Icon name="redCube" className="size-[15px]" /></button>
    </div>
    <button aria-label="More shortcuts" className="w-[16px] pl-[6px] text-[11px] font-bold">»</button>
    <button className={`ml-px flex h-5 w-[120px] items-center gap-[3px] bg-[#e6e4de] pl-[3px] font-bold ${sunken}`}>
      <Icon name="mcxDark" className="size-[12px]" />
      Mastercam Mill X4
    </button>
    <div className="ml-auto flex items-center pr-[6px]">
      <span className="flex h-[15px] w-[12px] items-center justify-center bg-[#163a86] text-[8px] text-white">TR</span>
      <button aria-label="Show hidden icons" className="mr-[3px] ml-[6px] text-[11px] font-bold">«</button>
      <Icon name="trayBall" className="mx-px size-[12px]" />
      <Icon name="trayNet" className="mx-px size-[12px]" />
      <Icon name="trayShield" className="mx-px size-[12px]" />
      <Icon name="traySound" className="mx-px size-[12px]" />
      <Icon name="trayUsb" className="mx-px size-[12px]" />
      <time className="ml-[4px]">09:57</time>
    </div>
  </div>
);

export default function App() {
  return (
    <div className="relative flex h-screen flex-col overflow-hidden bg-[#d0cec5] font-['Roboto',sans-serif] text-[8px] leading-[12px] text-[#222]">
      <header className="flex h-[17px] shrink-0 items-center bg-linear-to-r from-[#0d2a7d] via-[#3f69b5] to-[#8ab2ea] pl-px">
        <Icon name="mcx" className="size-[14px]" />
        <h1 className="flex-1 pl-px text-[9px] font-bold text-white">Mastercam Mill X4</h1>
        <div className="flex text-[9px] font-bold text-black">
          <button aria-label="Minimize" className={`h-[13px] w-[12px] bg-[#d0cec5] leading-[8px] ${raised}`}>_</button>
          <button aria-label="Restore" className={`flex h-[13px] w-[12px] items-center justify-center bg-[#d0cec5] ${raised}`}>
            <svg viewBox="0 0 8 8" className="size-[8px]"><path d="M3 3V1h4v4H5M1 3h4v4H1z" fill="none" stroke="#111" /></svg>
          </button>
          <button aria-label="Close" className={`ml-[2px] flex h-[13px] w-[12px] items-center justify-center bg-[#d0cec5] ${raised}`}>
            <svg viewBox="0 0 8 8" className="size-[8px]"><path d="m1 1 6 6M7 1 1 7" stroke="#111" strokeWidth="1.500" /></svg>
          </button>
        </div>
      </header>
      <nav className="flex h-[19px] shrink-0 items-center gap-[9px] border-b border-[#aaa79e] pl-[5px]">
        {menus.map((menu) => <button key={menu}>{menu}</button>)}
      </nav>
      <Toolbar items={rowOne} label="Standard tools" />
      <Toolbar items={rowTwo} label="Sketch tools" />
      <InputBar />
      <div className="flex h-[28px] shrink-0 items-center border-b border-[#9a9890] pl-[142px]">Ribbon Bar</div>
      <main className="flex min-h-0 flex-1">
        <div className="flex w-[34px] shrink-0 border-r border-[#b5b2a9]">
          <SideBar items={leftBar} label="Solids" />
        </div>
        <OperationsManager />
        <div className="min-w-0 flex-1 bg-[#000090]">
          <Viewport />
        </div>
        <div className="flex w-[22px] shrink-0 border-l-2 border-white">
          <SideBar items={rightBar} label="Recent functions" />
        </div>
      </main>
      <StatusBar />
      <Taskbar />
      <p className="absolute bottom-[37px] left-[386px] bg-white/50 px-[2px] font-['DejaVu_Sans',sans-serif] text-[17px] leading-[22px] text-[#333]">
        www.cadbankasi.com
      </p>
    </div>
  );
}
